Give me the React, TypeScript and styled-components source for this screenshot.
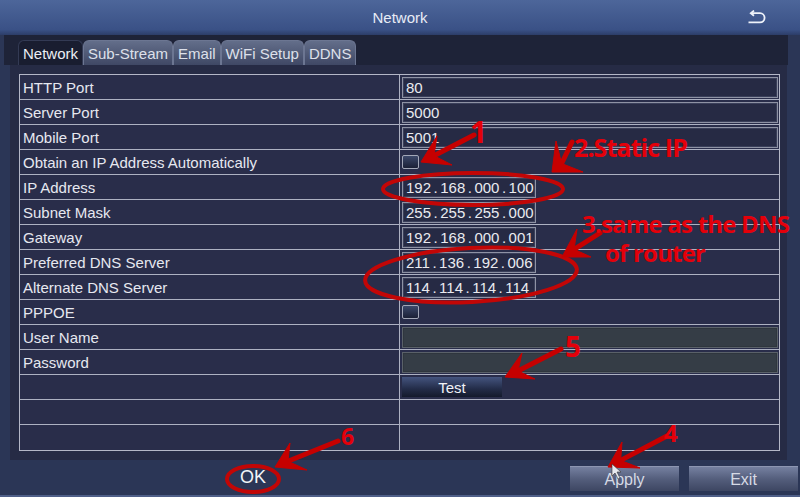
import styled, { createGlobalStyle } from 'styled-components';

const GlobalStyle = createGlobalStyle`
  html, body { margin: 0; padding: 0; background: #2b3656; }
  body { font-family: "Liberation Sans", Arial, sans-serif; }
`;

const Window = styled.div`
  position: relative;
  width: 800px;
  height: 497px;
  overflow: hidden;
  display: flex;
  flex-direction: column;
  background: #2b3656;
  color: #e4e6ee;
  font-size: 15px;
`;

const TitleBar = styled.div`
  height: 35px;
  flex: none;
  display: grid;
  grid-template-columns: 1fr auto 1fr;
  align-items: center;
  padding-bottom: 1px;
  box-sizing: border-box;
  background: linear-gradient(#4d669a, #3a5186 85%, #2c3d68);
  color: #e8ecf6;
`;

const Title = styled.div`
  font-size: 15px;
`;

const BackIcon = styled.svg`
  justify-self: end;
  margin-right: 33px;
`;

const TabStrip = styled.div`
  height: 30px;
  flex: none;
  margin: 0 12px 0 4px;
  padding-left: 14px;
  background: #1e2338;
  display: flex;
  align-items: flex-end;
`;

const Tab = styled.div<{ $active?: boolean }>`
  height: 25px;
  box-sizing: border-box;
  padding: 0 4px;
  display: flex;
  align-items: center;
  border-radius: 6px 6px 0 0;
  border: 1px solid ${(p) => (p.$active ? '#333a54' : '#6c7692')};
  border-bottom: none;
  background: ${(p) => (p.$active ? '#191d30' : 'linear-gradient(#636e8a, #3f4865)')};
  color: ${(p) => (p.$active ? '#eceef4' : '#dde0ea')};
  font-size: 15px;
`;

const Panel = styled.div`
  flex: none;
  margin: 0 13px 0 10px;
  padding: 9px 7px 9px 9px;
  background: #262b45;
`;

const Table = styled.div`
  border: 1px solid #b4b7c7;
`;

const Row = styled.div`
  display: grid;
  grid-template-columns: 380px 1fr;
  height: 25px;
  box-sizing: border-box;
  background: #292d4a;
  border-bottom: 1px solid #adb1c2;
  &:last-child { border-bottom: none; }
`;

const Label = styled.div`
  display: flex;
  align-items: center;
  padding-left: 3px;
  border-right: 1px solid #adb1c2;
  color: #e6e8f0;
`;

const Value = styled.div`
  display: flex;
  align-items: center;
  padding: 0 1px 0 2px;
`;

const Field = styled.div<{ $w?: number; $disabled?: boolean }>`
  width: ${(p) => (p.$w ? `${p.$w}px` : '100%')};
  height: 21px;
  box-sizing: border-box;
  display: flex;
  align-items: center;
  padding-left: 3px;
  border: 1px solid ${(p) => (p.$disabled ? '#5a6169' : '#8e92a4')};
  box-shadow: inset 0 0 0 1px ${(p) => (p.$disabled ? '#2f363e' : '#3a3f5a')};
  background: ${(p) => (p.$disabled ? '#353d46' : '#262a44')};
  color: #eaeaf0;
  font-size: 15px;
`;

const Dot = styled.span`
  padding: 0 2.5px;
`;

const Check = styled.div`
  width: 17px;
  height: 14px;
  box-sizing: border-box;
  border: 1px solid #a3a7b7;
  border-radius: 2px;
  background: linear-gradient(#3c486a, #1b2036);
`;

const TestButton = styled.div`
  width: 100px;
  height: 20px;
  display: flex;
  align-items: center;
  justify-content: center;
  background: linear-gradient(#44547e, #232c48 60%, #141a2c);
  color: #f0f2f6;
  font-size: 15px;
`;

const Footer = styled.div`
  flex: 1;
  display: flex;
  align-items: flex-start;
  padding: 6px 2px 0 0;
  border-bottom: 2px solid #4f5f88;
`;

const OkText = styled.div`
  margin-left: 240px;
  line-height: 22px;
  font-size: 18px;
  color: #f2f4f8;
`;

const Buttons = styled.div`
  margin-left: auto;
  display: flex;
  gap: 10px;
`;

const Button = styled.div`
  width: 109px;
  height: 22px;
  display: flex;
  align-items: center;
  justify-content: center;
  padding-top: 2px;
  background: linear-gradient(#7580a0, #545e7c 50%, #3d4662);
  border-top: 1px solid #8d96b2;
  color: #d6dae5;
  font-size: 16px;
`;

const Overlay = styled.svg`
  position: absolute;
  left: 0;
  top: 0;
  pointer-events: none;
`;

const Note = styled.div<{ $x: number; $y: number; $size: number; $ls?: number }>`
  position: absolute;
  left: ${(p) => p.$x}px;
  top: ${(p) => p.$y}px;
  font-family: "Open Sans", "DejaVu Sans", sans-serif;
  font-weight: 700;
  font-size: ${(p) => p.$size}px;
  letter-spacing: ${(p) => p.$ls ?? 0}px;
  line-height: 1;
  color: #e4000a;
  white-space: nowrap;
`;

type Pt = [number, number];

const arrows: { tail: Pt; tip: Pt; b1: Pt; b2: Pt }[] = [
  { tail: [474, 135], tip: [421, 162], b1: [437, 136], b2: [452, 165] },
  { tail: [572, 142], tip: [552, 172], b1: [556, 141], b2: [583, 172] },
  { tail: [600, 233], tip: [562, 257], b1: [577, 229], b2: [591, 257] },
  { tail: [667, 436], tip: [608, 467], b1: [622, 442], b2: [640, 468] },
  { tail: [561, 349], tip: [505, 377], b1: [522, 353], b2: [535, 379] },
  { tail: [338, 441], tip: [275, 467], b1: [290, 443], b2: [307, 470] },
];

function Arrow({ tail, tip, b1, b2 }: { tail: Pt; tip: Pt; b1: Pt; b2: Pt }) {
  const mx = (b1[0] + b2[0]) / 2;
  const my = (b1[1] + b2[1]) / 2;
  const neck: Pt = [tip[0] + (mx - tip[0]) * 0.55, tip[1] + (my - tip[1]) * 0.55];
  return (
    <g fill="#c60000" stroke="#c60000">
      <line x1={tail[0]} y1={tail[1]} x2={neck[0]} y2={neck[1]} strokeWidth={5} strokeLinecap="round" />
      <polygon points={[tip, b1, neck, b2].map((p) => p.join(',')).join(' ')} strokeWidth={1} />
    </g>
  );
}

const labels = [
  'HTTP Port',
  'Server Port',
  'Mobile Port',
  'Obtain an IP Address Automatically',
  'IP Address',
  'Subnet Mask',
  'Gateway',
  'Preferred DNS Server',
  'Alternate DNS Server',
  'PPPOE',
  'User Name',
  'Password',
  '',
  '',
  '',
];

function Ip({ value }: { value: string }) {
  const parts = value.split('.');
  return (
    <Field $w={134}>
      {parts.map((p, i) => (
        <span key={i}>
          {p}
          {i < parts.length - 1 && <Dot>.</Dot>}
        </span>
      ))}
    </Field>
  );
}

function renderValue(i: number) {
  switch (i) {
    case 0: return <Field>80</Field>;
    case 1: return <Field>5000</Field>;
    case 2: return <Field>5001</Field>;
    case 3: return <Check />;
    case 4: return <Ip value="192.168.000.100" />;
    case 5: return <Ip value="255.255.255.000" />;
    case 6: return <Ip value="192.168.000.001" />;
    case 7: return <Ip value="211.136.192.006" />;
    case 8: return <Ip value="114.114.114.114" />;
    case 9: return <Check />;
    case 10: return <Field $disabled />;
    case 11: return <Field $disabled />;
    case 12: return <TestButton>Test</TestButton>;
    default: return null;
  }
}

export default function App() {
  return (
    <>
      <GlobalStyle />
      <Window>
        <TitleBar>
          <span />
          <Title>Network</Title>
          <BackIcon width="20" height="14" viewBox="0 0 20 14">
            <path d="M4 3.2 H13 A4.6 4.6 0 0 1 13 12.4 H1.5" fill="none" stroke="#eef2fa" strokeWidth="1.8" />
            <path d="M7 0.6 L3.8 3.2 L7 5.8" fill="none" stroke="#eef2fa" strokeWidth="1.8" />
          </BackIcon>
        </TitleBar>

        <TabStrip>
          <Tab $active>Network</Tab>
          <Tab>Sub-Stream</Tab>
          <Tab>Email</Tab>
          <Tab>WiFi Setup</Tab>
          <Tab>DDNS</Tab>
        </TabStrip>

        <Panel>
          <Table>
            {labels.map((l, i) => (
              <Row key={i}>
                <Label>{l}</Label>
                <Value>{renderValue(i)}</Value>
              </Row>
            ))}
          </Table>
        </Panel>

        <Footer>
          <OkText>OK</OkText>
          <Buttons>
            <Button>Apply</Button>
            <Button>Exit</Button>
          </Buttons>
        </Footer>

        <Overlay width="800" height="497" viewBox="0 0 800 497">
          <g fill="none" stroke="#c20606" strokeWidth="4">
            <ellipse cx="473" cy="189" rx="90" ry="16" />
            <ellipse cx="471" cy="275" rx="106" ry="27" transform="rotate(-3 471 275)" />
            <ellipse cx="253" cy="479" rx="26" ry="13" />
          </g>
          {arrows.map((a, i) => (
            <Arrow key={i} {...a} />
          ))}
          <polygon points="612,464 612,476 615,473 618,479 620,478 617,472 621,472" fill="#e8eaf0" stroke="#333" strokeWidth="0.6" />
        </Overlay>

        <Note $x={470} $y={117} $size={30}>1</Note>
        <Note $x={574} $y={135} $size={25} $ls={-0.9}>2.Static IP</Note>
        <Note $x={582} $y={212} $size={24} $ls={-0.8}>3.same as the DNS</Note>
        <Note $x={605} $y={241} $size={24} $ls={-0.8}>of router</Note>
        <Note $x={664} $y={421} $size={24}>4</Note>
        <Note $x={565} $y={332} $size={28}>5</Note>
        <Note $x={341} $y={425} $size={23}>6</Note>
      </Window>
    </>
  );
}
